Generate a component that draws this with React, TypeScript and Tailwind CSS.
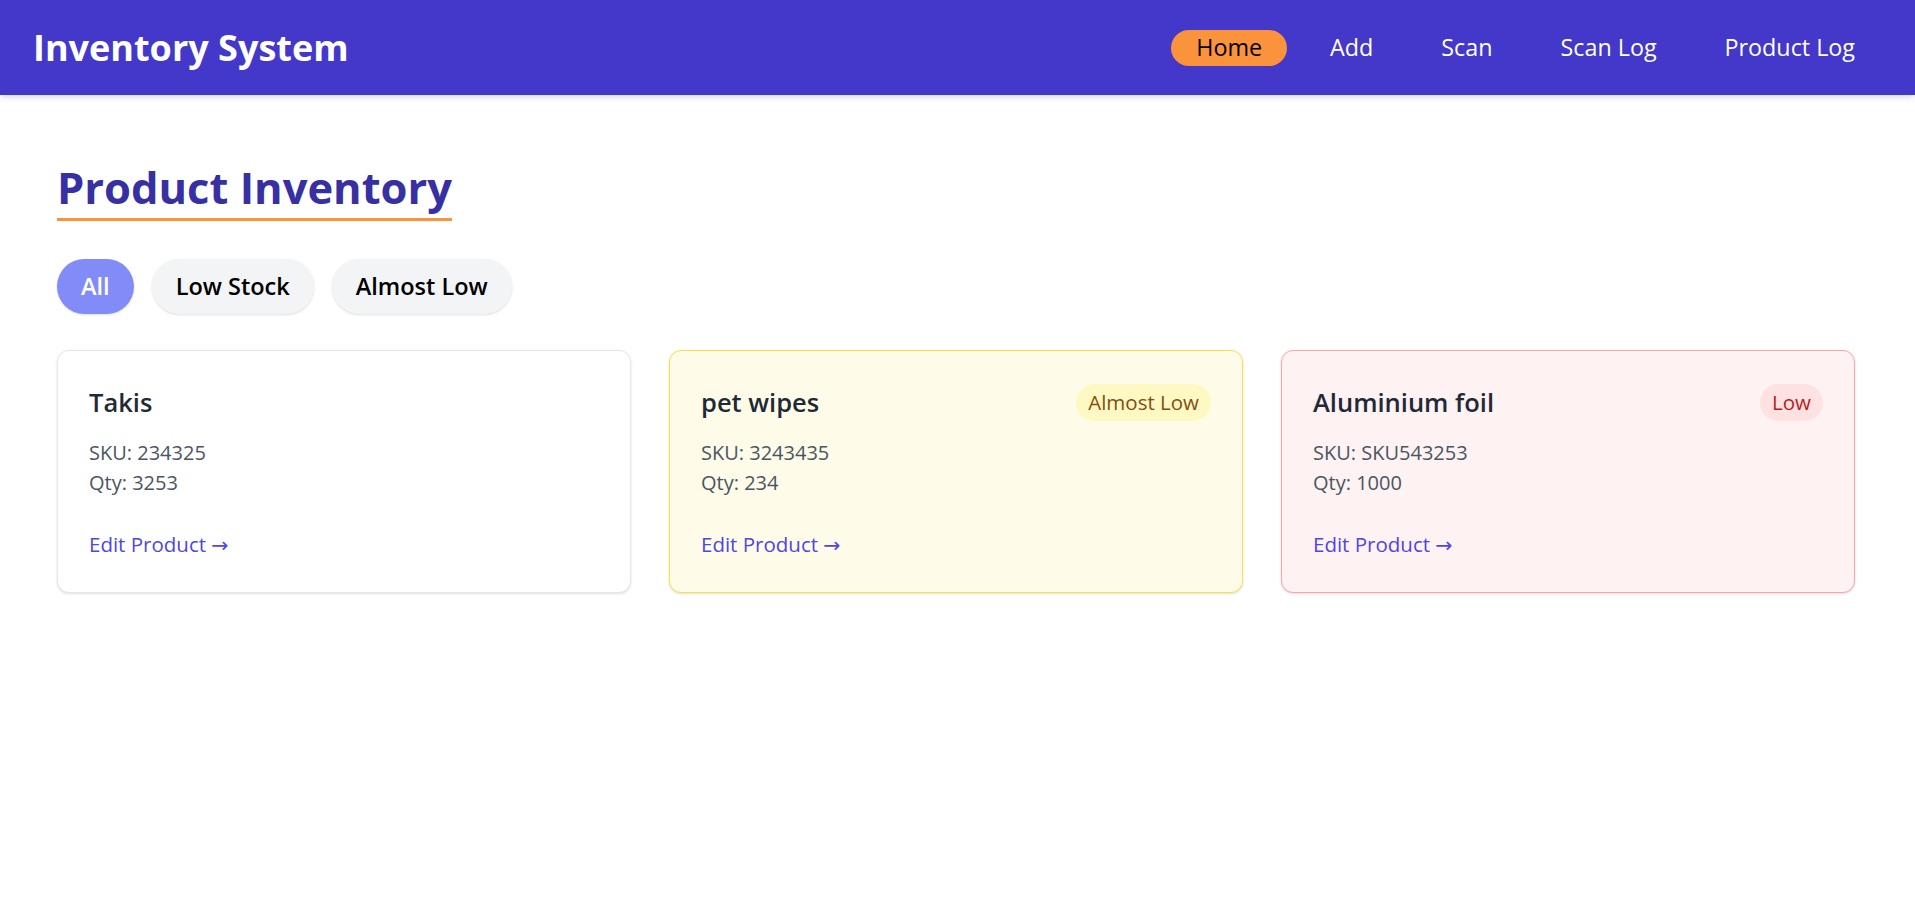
import { useState } from "react";

type Product = {
  name: string;
  sku: string;
  qty: number;
  status: "ok" | "almost" | "low";
};

const products: Product[] = [
  { name: "Takis", sku: "234325", qty: 3253, status: "ok" },
  { name: "pet wipes", sku: "3243435", qty: 234, status: "almost" },
  { name: "Aluminium foil", sku: "SKU543253", qty: 1000, status: "low" },
];

const navLinks = ["Home", "Add", "Scan", "Scan Log", "Product Log"];
const filters = ["All", "Low Stock", "Almost Low"];

function ProductCard({ product }: { product: Product }) {
  const cardStyle =
    product.status === "low"
      ? "bg-[#fef2f2] border-[#fca5a5]"
      : product.status === "almost"
        ? "bg-[#fefce8] border-[#fde047]"
        : "bg-white border-[#e5e7eb]";

  return (
    <div className={`rounded-[12px] border shadow-sm pt-[33px] pb-[32px] px-[31px] ${cardStyle}`}>
      <div className="flex h-[37px] items-center justify-between">
        <h2 className="text-[25.5px] font-semibold text-[#1f2937]">{product.name}</h2>
        {product.status === "almost" && (
          <span className="flex h-[37px] items-center rounded-full bg-[#fef9c3] px-[12px] text-[20.5px] font-medium text-[#854d0e]">
            Almost Low
          </span>
        )}
        {product.status === "low" && (
          <span className="flex h-[37px] items-center rounded-full bg-[#fee2e2] px-[12px] text-[20.5px] font-medium text-[#b91c1c]">
            Low
          </span>
        )}
      </div>
      <div className="mt-[17px] text-[20px] leading-[30px] text-[#4b5563]">
        <p>SKU: {product.sku}</p>
        <p>Qty: {product.qty}</p>
      </div>
      <a href="#" className="mt-[31px] block text-[20.5px] leading-[30px] font-medium text-[#4f46e5]">
        Edit Product <span className="font-['DejaVu_Sans',sans-serif] font-normal">→</span>
      </a>
    </div>
  );
}

export default function App() {
  const [filter, setFilter] = useState("All");

  return (
    <div className="min-h-screen bg-white font-['Open_Sans',sans-serif]">
      <header className="flex h-[95px] items-center justify-between bg-[#4338ca] pl-[33px] pr-[35px] shadow-md">
        <h1 className="text-[36px] font-bold text-white">Inventory System</h1>
        <nav className="flex items-center gap-[18px]">
          {navLinks.map((link) => (
            <a
              key={link}
              href="#"
              className={`flex h-[36px] items-center rounded-full px-[25px] text-[23.3px] ${
                link === "Home" ? "bg-[#fb923c] text-black" : "text-white"
              }`}
            >
              {link}
            </a>
          ))}
        </nav>
      </header>

      <main className="pl-[57px] pr-[60px] pt-[66px]">
        <h1 className="inline-block border-b-[3px] border-[#fb923c] pb-[3px] text-[43.5px] leading-[54px] font-bold text-[#3730a3]">
          Product Inventory
        </h1>

        <div className="mt-[38px] flex gap-[18px]">
          {filters.map((f) => (
            <button
              key={f}
              onClick={() => setFilter(f)}
              className={`h-[55px] rounded-full px-[24px] text-[23.5px] font-semibold shadow-sm ${
                filter === f ? "bg-[#818cf8] text-white" : "bg-[#f3f4f6] text-black"
              }`}
            >
              {f}
            </button>
          ))}
        </div>

        <div className="mt-[36px] grid grid-cols-3 gap-[38px]">
          {products.map((p) => (
            <ProductCard key={p.name} product={p} />
          ))}
        </div>
      </main>
    </div>
  );
}
